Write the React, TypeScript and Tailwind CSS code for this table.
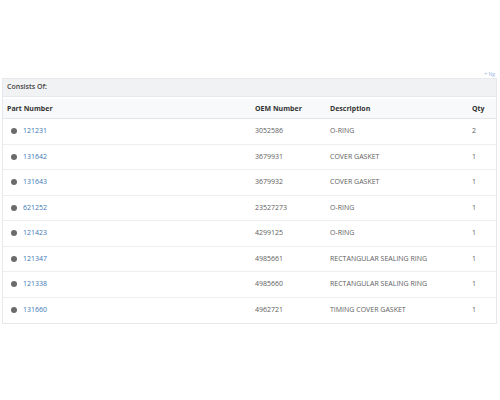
const rows = [
	{ part: "121231", oem: "3052586", desc: "O-RING", qty: "2" },
	{ part: "131642", oem: "3679931", desc: "COVER GASKET", qty: "1" },
	{ part: "131643", oem: "3679932", desc: "COVER GASKET", qty: "1" },
	{ part: "621252", oem: "23527273", desc: "O-RING", qty: "1" },
	{ part: "121423", oem: "4299125", desc: "O-RING", qty: "1" },
	{ part: "121347", oem: "4985661", desc: "RECTANGULAR SEALING RING", qty: "1" },
	{ part: "121338", oem: "4985660", desc: "RECTANGULAR SEALING RING", qty: "1" },
	{ part: "131660", oem: "4962721", desc: "TIMING COVER GASKET", qty: "1" },
];

const cols = "grid grid-cols-[248px_75px_142px_1fr]";

const App = () => {
	return (
		<div
			className="w-[500px] h-[400px] bg-white pt-[70px] px-[2px] text-[7px] text-[#606060]"
			style={{ fontFamily: '"Open Sans", "Noto Sans", sans-serif' }}
		>
			<div className="h-[8px] flex justify-end pr-[3px] text-[5px] leading-[8px] text-[#9bb8e0]">
				+ Ng
			</div>
			<div className="w-[495px] border border-[#e6e8eb]">
				<div className="h-[18px] flex items-center px-[4px] bg-[#f1f2f4] font-semibold text-[#444] border-b border-[#e6e8eb]">
					Consists Of:
				</div>
				<div className="pt-[2px]">
					<div
						className={`${cols} h-[20px] items-center pt-[2px] bg-[#f8f9fa] font-bold text-[#333] border-b border-[#e3e5e8]`}
					>
						<div className="pl-[4px]">Part Number</div>
						<div className="pl-[4px]">OEM Number</div>
						<div className="pl-[4px]">Description</div>
						<div className="pl-[4px]">Qty</div>
					</div>
					{rows.map((row, index) => (
						<div
							key={index}
							className={`${cols} h-[25.5px] items-center ${
								index < rows.length - 1 ? "border-b border-[#eceef0]" : ""
							}`}
						>
							<div className="flex items-center pl-[8px] gap-[6px]">
								<span className="w-[6px] h-[6px] rounded-full bg-[#6b6b6b]" />
								<span className="text-[#3c78b5]">{row.part}</span>
							</div>
							<div className="pl-[4px]">{row.oem}</div>
							<div className="pl-[4px]">{row.desc}</div>
							<div className="pl-[4px]">{row.qty}</div>
						</div>
					))}
				</div>
			</div>
		</div>
	);
};

export default App;
